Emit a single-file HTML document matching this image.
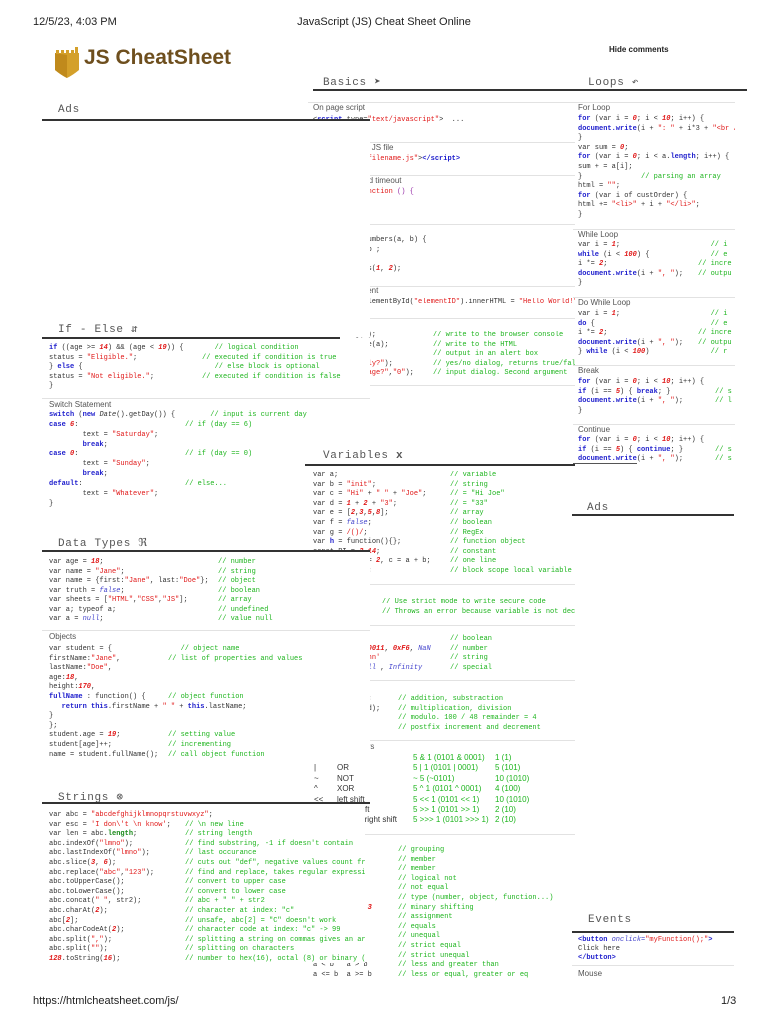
<!DOCTYPE html>
<html><head><meta charset="utf-8"><style>
*{margin:0;padding:0;box-sizing:border-box}
body{width:768px;height:1024px;background:#fff;position:relative;overflow:hidden;font-family:"Liberation Sans",sans-serif;color:#222}
.a{position:absolute}
pre{position:absolute;font-family:"Liberation Mono",monospace;font-size:7px;line-height:9.6px;color:#333;white-space:pre}
.k{color:#1c1ccc;font-weight:bold}
.s{color:#e01818}
.n{color:#e01818;font-style:italic;font-weight:bold}
.c{color:#1fb51f}
.i{color:#4444cc;font-style:italic}
.p{color:#9933aa}
.lbl{position:absolute;font-size:8px;color:#555}
.h{position:absolute;font-family:"Liberation Mono",monospace;font-size:11px;letter-spacing:.7px;color:#555}
.line{position:absolute;height:2px;background:#333}
.sep{position:absolute;height:1px;background:#e2e2e2}
.box{position:absolute;background:#fff;overflow:hidden}
.bw{position:absolute;font-size:8px;line-height:10.4px;white-space:pre}
.g{color:#1fb51f}
</style></head><body>

<div class="a" style="left:33px;top:16px;font-size:11px">12/5/23, 4:03 PM</div>
<div class="a" style="left:0;width:768px;top:16px;font-size:11px;text-align:center">JavaScript (JS) Cheat Sheet Online</div>
<div class="a" style="left:609px;top:45px;font-size:8px;font-weight:bold">Hide comments</div>

<svg class="a" style="left:54px;top:46px" width="26" height="33" viewBox="0 0 26 33">
<path d="M1 7 L25 7 L25 24 Q19 29 13 32 Q7 29 1 24 Z" fill="#d4a02a"/>
<path d="M1 7 L13 9 L13 32 Q7 29 1 24 Z" fill="#c08a1c"/>
<rect x="2" y="4" width="3" height="4" fill="#d4a02a"/><rect x="7" y="4" width="3" height="4" fill="#d4a02a"/><rect x="12" y="4" width="3" height="4" fill="#d4a02a"/><rect x="17" y="4" width="3" height="4" fill="#d4a02a"/><rect x="21" y="1" width="3" height="7" fill="#d4a02a"/>
</svg>
<div class="a" style="left:84px;top:46px;font-size:21px;font-weight:bold;color:#6e4f1e">JS CheatSheet</div>

<!-- MIDDLE COLUMN -->
<div class="h" style="left:323px;top:75px">Basics ➤</div>
<div class="h" style="left:588px;top:75px">Loops ↶</div>
<div class="line" style="left:313px;top:89px;width:434px"></div>

<div class="sep" style="left:308px;top:102px;width:267px"></div>
<div class="lbl" style="left:313px;top:103px">On page script</div>
<pre style="left:313px;top:116px">&lt;<span class="k">script</span> type=<span class="s">"text/javascript"</span>&gt;  ...
&lt;/<span class="k">script</span>&gt;</pre>
<div class="sep" style="left:308px;top:142px;width:267px"></div>
<div class="lbl" style="left:313px;top:143px">Include external JS file</div>
<pre style="left:313px;top:155px">&lt;<span class="k">script</span> src=<span class="s">"filename.js"</span>&gt;<span class="k">&lt;/script&gt;</span></pre>
<div class="sep" style="left:308px;top:175px;width:267px"></div>
<div class="lbl" style="left:313px;top:176px">Delay - 1 second timeout</div>
<pre style="left:313px;top:188px"><span class="k">setTimeout</span>(<span class="s">function</span> <span class="p">() {</span>
  
}, 1000);</pre>
<div class="sep" style="left:308px;top:224px;width:267px"></div>
<div class="lbl" style="left:313px;top:225px">Functions</div>
<pre style="left:313px;top:236px"><span class="k">function</span> addNumbers(a, b) {
  <span class="k">return</span> a + b ;
}
x = addNumbers(<span class="n">1</span>, <span class="n">2</span>);</pre>
<div class="sep" style="left:308px;top:286px;width:267px"></div>
<div class="lbl" style="left:313px;top:286px">Edit DOM element</div>
<pre style="left:313px;top:298px;width:262px;overflow:hidden">document.getElementById(<span class="s">"elementID"</span>).innerHTML = <span class="s">"Hello World!"</span>;</pre>
<div class="sep" style="left:308px;top:318px;width:267px"></div>
<div class="lbl" style="left:313px;top:318px">Output</div>
<pre style="left:313px;top:331px">console.log(a);
document.write(a);
alert(a);
confirm(<span class="s">"Really?"</span>);
prompt(<span class="s">"Your age?"</span>,<span class="s">"0"</span>);</pre>
<pre style="left:433px;top:331px;width:142px;overflow:hidden"><span class="c">// write to the browser console
// write to the HTML
// output in an alert box
// yes/no dialog, returns true/false
// input dialog. Second argument</span></pre>
<div class="sep" style="left:308px;top:385px;width:267px"></div>

<!-- Variables -->
<div class="box" style="left:305px;top:445px;width:270px;height:530px"></div>
<div class="h" style="left:323px;top:450px">Variables <b>x</b></div>
<div class="line" style="left:305px;top:464px;width:270px"></div>
<pre style="left:313px;top:471px">var a;
var b = <span class="s">"init"</span>;
var c = <span class="s">"Hi"</span> + <span class="s">" "</span> + <span class="s">"Joe"</span>;
var d = <span class="n">1</span> + <span class="n">2</span> + <span class="s">"3"</span>;
var e = [<span class="n">2</span>,<span class="n">3</span>,<span class="n">5</span>,<span class="n">8</span>];
var f = <span class="i">false</span>;
var g = <span class="s">/()/</span>;
var <span class="k">h</span> = function(){};
const PI = <span class="n">3.14</span>;
var a = <span class="n">1</span>, b = <span class="n">2</span>, c = a + b;
let z = <span class="s">'zzz'</span>;</pre>
<pre style="left:450px;top:471px;width:125px;overflow:hidden"><span class="c">// variable
// string
// = "Hi Joe"
// = "33"
// array
// boolean
// RegEx
// function object
// constant
// one line
// block scope local variable</span></pre>
<div class="sep" style="left:308px;top:584px;width:267px"></div>
<pre style="left:313px;top:598px"><span class="s">"use strict"</span>;
x = <span class="n">3.14</span>;</pre>
<pre style="left:382px;top:598px;width:193px;overflow:hidden"><span class="c">// Use strict mode to write secure code
// Throws an error because variable is not declared</span></pre>
<div class="sep" style="left:308px;top:625px;width:267px"></div>
<pre style="left:313px;top:635px"><span class="i">true</span> / <span class="i">false</span>
<span class="n">18</span>, <span class="n">3.14</span>, <span class="n">0b10011</span>, <span class="n">0xF6</span>, <span class="i">NaN</span>
<span class="s">"flower"</span>, <span class="s">'John'</span>
<span class="i">undefined</span>, <span class="i">null</span> , <span class="i">Infinity</span></pre>
<pre style="left:450px;top:635px"><span class="c">// boolean
// number
// string
// special</span></pre>
<div class="sep" style="left:308px;top:680px;width:267px"></div>
<pre style="left:313px;top:695px">a = b + c - d;
a = b * (c / d);
x = <span class="n">100</span> % <span class="n">48</span>;
a++; b--;</pre>
<pre style="left:398px;top:695px"><span class="c">// addition, substraction
// multiplication, division
// modulo. 100 / 48 remainder = 4
// postfix increment and decrement</span></pre>
<div class="sep" style="left:308px;top:740px;width:267px"></div>
<div class="lbl" style="left:313px;top:742px">Bitwise operators</div>
<div class="bw" style="left:314px;top:753px;color:#333">&amp;
|
~
^
&lt;&lt;
&gt;&gt;
&gt;&gt;&gt;</div>
<div class="bw" style="left:337px;top:753px;color:#333">AND
OR
NOT
XOR
left shift
right shift
zero fill right shift</div>
<div class="bw g" style="left:413px;top:753px">5 &amp; 1 (0101 &amp; 0001)
5 | 1 (0101 | 0001)
~ 5 (~0101)
5 ^ 1 (0101 ^ 0001)
5 &lt;&lt; 1 (0101 &lt;&lt; 1)
5 &gt;&gt; 1 (0101 &gt;&gt; 1)
5 &gt;&gt;&gt; 1 (0101 &gt;&gt;&gt; 1)</div>
<div class="bw g" style="left:495px;top:753px">1 (1)
5 (101)
10 (1010)
4 (100)
10 (1010)
2 (10)
2 (10)</div>
<div class="sep" style="left:308px;top:834px;width:267px"></div>
<pre style="left:313px;top:846px">a * (b + c)
person.age
person[age]
!(a == b)
a != b
typeof a
x &lt;&lt; 2  x &gt;&gt; <span class="n">3</span>
x = y
a == b
a != b
a === b
a !== b
a &lt; b   a &gt; b
a &lt;= b  a &gt;= b</pre>
<pre style="left:398px;top:846px"><span class="c">// grouping
// member
// member
// logical not
// not equal
// type (number, object, function...)
// minary shifting
// assignment
// equals
// unequal
// strict equal
// strict unequal
// less and greater than
// less or equal, greater or eq</span></pre>

<!-- RIGHT COLUMN -->
<div class="a" style="left:573px;top:100px;width:162px;height:370px;overflow:hidden">
<div class="sep" style="left:0;top:2px;width:162px"></div>
<div class="lbl" style="left:5px;top:3px">For Loop</div>
<pre style="left:5px;top:15px"><span class="k">for</span> (var i = <span class="n">0</span>; i &lt; <span class="n">10</span>; i++) {
<span class="k">document.write</span>(i + <span class="s">": "</span> + i*3 + <span class="s">"&lt;br /&gt;"</span>);
}
var sum = <span class="n">0</span>;
<span class="k">for</span> (var i = <span class="n">0</span>; i &lt; a.<span class="k">length</span>; i++) {
sum + = a[i];
}              <span class="c">// parsing an array</span>
html = <span class="s">""</span>;
<span class="k">for</span> (var i of custOrder) {
html += <span class="s">"&lt;li&gt;"</span> + i + <span class="s">"&lt;/li&gt;"</span>;
}</pre>
<div class="sep" style="left:0;top:129px;width:162px"></div>
<div class="lbl" style="left:5px;top:130px">While Loop</div>
<pre style="left:5px;top:141px">var i = <span class="n">1</span>;
<span class="k">while</span> (i &lt; <span class="n">100</span>) {
i *= <span class="n">2</span>;
<span class="k">document.write</span>(i + <span class="s">", "</span>);
}</pre>
<pre style="left:125px;top:141px"><span class="c">   // i
   // e
// incre
// outpu</span></pre>
<div class="sep" style="left:0;top:197px;width:162px"></div>
<div class="lbl" style="left:5px;top:198px">Do While Loop</div>
<pre style="left:5px;top:210px">var i = <span class="n">1</span>;
<span class="k">do</span> {
i *= <span class="n">2</span>;
<span class="k">document.write</span>(i + <span class="s">", "</span>);
} <span class="k">while</span> (i &lt; <span class="n">100</span>)</pre>
<pre style="left:125px;top:210px"><span class="c">   // i
   // e
// incre
// outpu
   // r</span></pre>
<div class="sep" style="left:0;top:265px;width:162px"></div>
<div class="lbl" style="left:5px;top:266px">Break</div>
<pre style="left:5px;top:278px"><span class="k">for</span> (var i = <span class="n">0</span>; i &lt; <span class="n">10</span>; i++) {
<span class="k">if</span> (i == <span class="n">5</span>) { <span class="k">break</span>; }
<span class="k">document.write</span>(i + <span class="s">", "</span>);
}</pre>
<pre style="left:142px;top:278px"><span class="c">
// s
// l</span></pre>
<div class="sep" style="left:0;top:324px;width:162px"></div>
<div class="lbl" style="left:5px;top:325px">Continue</div>
<pre style="left:5px;top:336px"><span class="k">for</span> (var i = <span class="n">0</span>; i &lt; <span class="n">10</span>; i++) {
<span class="k">if</span> (i == <span class="n">5</span>) { <span class="k">continue</span>; }
<span class="k">document.write</span>(i + <span class="s">", "</span>);</pre>
<pre style="left:142px;top:336px"><span class="c">
// s
// s</span></pre>
</div>
<div class="line" style="left:573px;top:463px;width:64px;height:1px;background:#555"></div>
<div class="h" style="left:587px;top:502px">Ads</div>
<div class="line" style="left:572px;top:514px;width:162px"></div>
<div class="h" style="left:588px;top:914px">Events</div>
<div class="line" style="left:572px;top:931px;width:162px"></div>
<pre style="left:578px;top:936px;line-height:9px"><span class="k">&lt;button</span> <span class="i">onclick=</span><span class="s">"myFunction();"</span><span class="k">&gt;</span>
Click here
<span class="k">&lt;/button&gt;</span></pre>
<div class="sep" style="left:572px;top:965px;width:162px"></div>
<div class="lbl" style="left:578px;top:969px">Mouse</div>

<!-- LEFT COLUMN -->
<div class="h" style="left:58px;top:104px">Ads</div>
<div class="box" style="left:42px;top:119px;width:328px;height:218px"></div>
<div class="line" style="left:42px;top:119px;width:328px"></div>

<div class="h" style="left:58px;top:322px">If - Else ⇵</div>
<div class="box" style="left:42px;top:339px;width:328px;height:106px"></div>
<div class="box" style="left:42px;top:445px;width:263px;height:70px"></div>
<div class="line" style="left:42px;top:337px;width:298px"></div>
<pre style="left:49px;top:344px"><span class="k">if</span> ((age &gt;= <span class="n">14</span>) &amp;&amp; (age &lt; <span class="n">19</span>)) {
status = <span class="s">"Eligible."</span>;
} <span class="k">else</span> {
status = <span class="s">"Not eligible."</span>;
}</pre>
<pre style="left:202px;top:344px"><span class="c">   // logical condition
// executed if condition is true
   // else block is optional
// executed if condition is false</span></pre>
<div class="sep" style="left:42px;top:398px;width:328px"></div>
<div class="lbl" style="left:49px;top:400px">Switch Statement</div>
<pre style="left:49px;top:411px;line-height:9.85px"><span class="k">switch</span> (<span class="k">new</span> <span class="i" style="color:#333">Date</span>().getDay()) {
<span class="k">case</span> <span class="n">6</span>:
        text = <span class="s">"Saturday"</span>;
        <span class="k">break</span>;
<span class="k">case</span> <span class="n">0</span>:
        text = <span class="s">"Sunday"</span>;
        <span class="k">break</span>;
<span class="k">default</span>:
        text = <span class="s">"Whatever"</span>;
}</pre>
<pre style="left:185px;top:411px;line-height:9.85px"><span class="c">      // input is current day
// if (day == 6)


// if (day == 0)


// else...</span></pre>

<div class="h" style="left:58px;top:536px">Data Types ℜ</div>
<div class="line" style="left:42px;top:550px;width:328px"></div>
<div class="box" style="left:42px;top:552px;width:328px;height:211px"></div>
<pre style="left:49px;top:558px;line-height:9.5px">var age = <span class="n">18</span>;
var name = <span class="s">"Jane"</span>;
var name = {first:<span class="s">"Jane"</span>, last:<span class="s">"Doe"</span>};
var truth = <span class="i">false</span>;
var sheets = [<span class="s">"HTML"</span>,<span class="s">"CSS"</span>,<span class="s">"JS"</span>];
var a; typeof a;
var a = <span class="i">null</span>;</pre>
<pre style="left:218px;top:558px;line-height:9.5px"><span class="c">// number
// string
// object
// boolean
// array
// undefined
// value null</span></pre>
<div class="sep" style="left:42px;top:630px;width:328px"></div>
<div class="lbl" style="left:49px;top:632px">Objects</div>
<pre style="left:49px;top:645px;line-height:9.6px">var student = {
firstName:<span class="s">"Jane"</span>,
lastName:<span class="s">"Doe"</span>,
age:<span class="n">18</span>,
height:<span class="n">170</span>,
<span class="k">fullName</span> : function() {
   <span class="k">return</span> <span class="k">this</span>.firstName + <span class="s">" "</span> + <span class="k">this</span>.lastName;
}
};
student.age = <span class="n">19</span>;
student[age]++;
name = student.fullName();</pre>
<pre style="left:168px;top:645px;line-height:9.6px"><span class="c">   // object name
// list of properties and values



// object function



// setting value
// incrementing
// call object function</span></pre>

<div class="h" style="left:58px;top:790px">Strings ⊗</div>
<div class="line" style="left:42px;top:802px;width:328px"></div>
<div class="box" style="left:42px;top:804px;width:323px;height:159px"></div>
<pre style="left:49px;top:811px;line-height:9.6px">var abc = <span class="s">"abcdefghijklmnopqrstuvwxyz"</span>;
var esc = <span class="s">'I don\'t \n know'</span>;
var len = abc.<span class="k" style="color:#1a8a1a">length</span>;
abc.indexOf(<span class="s">"lmno"</span>);
abc.lastIndexOf(<span class="s">"lmno"</span>);
abc.slice(<span class="n">3</span>, <span class="n">6</span>);
abc.replace(<span class="s">"abc"</span>,<span class="s">"123"</span>);
abc.toUpperCase();
abc.toLowerCase();
abc.concat(<span class="s">" "</span>, str2);
abc.charAt(<span class="n">2</span>);
abc[<span class="n">2</span>];
abc.charCodeAt(<span class="n">2</span>);
abc.split(<span class="s">","</span>);
abc.split(<span class="s">""</span>);
<span class="n">128</span>.toString(<span class="n">16</span>);</pre>
<pre style="left:185px;top:811px;line-height:9.6px;width:180px;overflow:hidden"><span class="c">
// \n new line
// string length
// find substring, -1 if doesn't contain
// last occurance
// cuts out "def", negative values count from behind
// find and replace, takes regular expressions
// convert to upper case
// convert to lower case
// abc + " " + str2
// character at index: "c"
// unsafe, abc[2] = "C" doesn't work
// character code at index: "c" -> 99
// splitting a string on commas gives an array
// splitting on characters
// number to hex(16), octal (8) or binary (2)</span></pre>

<div class="a" style="left:33px;top:995px;font-size:11px">https://htmlcheatsheet.com/js/</div>
<div class="a" style="left:721px;top:995px;font-size:11px">1/3</div>
</body></html>
